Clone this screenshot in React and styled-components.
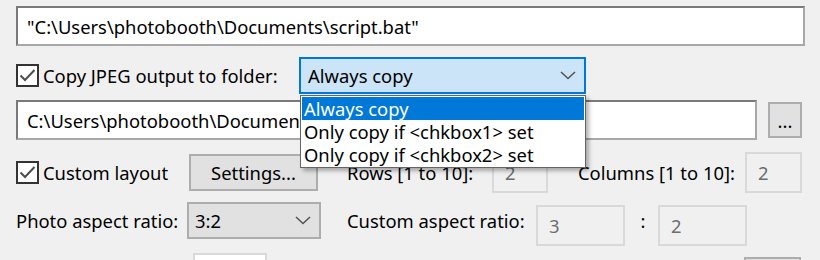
import React from "react";
import styled, { createGlobalStyle } from "styled-components";

const Global = createGlobalStyle`
  html, body {
    margin: 0;
    padding: 0;
    background: #f0f0f0;
    overflow: hidden;
  }
  body {
    font-family: "Noto Sans", "Open Sans", sans-serif;
    font-size: 18.4px;
    color: #000;
  }
`;

const Dialog = styled.div`
  width: 820px;
  height: 260px;
  padding: 6px 0 0 16px;
  box-sizing: border-box;
  display: flex;
  flex-direction: column;
  overflow: hidden;
`;

const Row = styled.div`
  display: flex;
  flex-shrink: 0;
  align-items: ${(p) => p.align || "center"};
  margin-top: ${(p) => p.mt || 0}px;
  height: ${(p) => p.h}px;
`;

const TextBox = styled.div`
  box-sizing: border-box;
  flex-shrink: 0;
  width: ${(p) => p.w}px;
  height: ${(p) => p.h || 40}px;
  background: #fff;
  border: 2px solid #7a7a7a;
  border-color: #7a7a7a #a8a8a8 #a8a8a8 #7a7a7a;
  padding-left: ${(p) => p.pl || 9}px;
  display: flex;
  align-items: center;
  white-space: nowrap;
  overflow: hidden;
`;

const DisabledBox = styled.div`
  box-sizing: border-box;
  width: ${(p) => p.w}px;
  height: ${(p) => p.h || 41}px;
  margin-top: ${(p) => p.mt || 0}px;
  margin-left: ${(p) => p.ml || 0}px;
  background: ${(p) => (p.white ? "#fff" : "#f0f0f0")};
  border: 2px solid #d9d9d9;
  color: #6d6d6d;
  padding-left: 11px;
  display: flex;
  align-items: center;
  flex-shrink: 0;
`;

const Check = styled.div`
  display: flex;
  align-items: center;
  width: ${(p) => p.w}px;
  flex-shrink: 0;
`;

const CheckBox = styled.span`
  box-sizing: border-box;
  width: 23px;
  height: 23px;
  border: 2px solid #333;
  background: #fff;
  display: inline-flex;
  align-items: center;
  justify-content: center;
  margin-right: 4px;
  flex-shrink: 0;
`;

const Label = styled.span`
  display: inline-block;
  width: ${(p) => (p.w ? `${p.w}px` : "auto")};
  margin-left: ${(p) => p.ml || 0}px;
  line-height: ${(p) => (p.lh ? `${p.lh}px` : "normal")};
  white-space: nowrap;
  flex-shrink: 0;
`;

const Button = styled.div`
  box-sizing: border-box;
  width: ${(p) => p.w}px;
  height: ${(p) => p.h}px;
  margin-left: ${(p) => p.ml || 0}px;
  margin-top: ${(p) => p.mt || 0}px;
  background: #e1e1e1;
  border: 2px solid #adadad;
  display: flex;
  align-items: center;
  justify-content: center;
  flex-shrink: 0;
`;

const ComboWrap = styled.div`
  position: relative;
  flex-shrink: 0;
`;

const Combo = styled.div`
  box-sizing: border-box;
  width: ${(p) => p.w}px;
  height: 37px;
  background: ${(p) => (p.focused ? "#cce4f7" : "#e1e1e1")};
  border: 2px solid ${(p) => (p.focused ? "#0078d7" : "#adadad")};
  padding: 0 8px 0 ${(p) => p.pl || 6}px;
  display: flex;
  align-items: center;
  justify-content: space-between;
`;

const List = styled.ul`
  position: absolute;
  top: 38px;
  left: 1px;
  box-sizing: border-box;
  width: 286px;
  margin: 0;
  padding: 1px;
  list-style: none;
  background: #fff;
  border: 1px solid #646464;
  box-shadow: 3px 3px 4px rgba(0, 0, 0, 0.3);
  z-index: 2;
`;

const Item = styled.li`
  height: 23px;
  line-height: 23px;
  padding-left: 2px;
  white-space: nowrap;
  background: ${(p) => (p.selected ? "#0078d7" : "transparent")};
  color: ${(p) => (p.selected ? "#fff" : "#000")};
`;

const Colon = styled.span`
  width: 8px;
  margin: 0 11px 0 14px;
  line-height: 37px;
  text-align: center;
`;

const Tick = () => (
  <svg width="19" height="19" viewBox="0 0 19 19">
    <polyline
      points="2.5,9.5 7,14 16.5,4"
      fill="none"
      stroke="#4d4d4d"
      strokeWidth="2"
    />
  </svg>
);

const Chevron = () => (
  <svg width="16" height="9" viewBox="0 0 16 9">
    <polyline
      points="1,1 8,7.5 15,1"
      fill="none"
      stroke="#555"
      strokeWidth="1.6"
    />
  </svg>
);

export default function App() {
  return (
    <>
      <Global />
      <Dialog>
        <TextBox w={789}>"C:\Users\photobooth\Documents\script.bat"</TextBox>

        <Row mt={11} h={37}>
          <Check w={283}>
            <CheckBox>
              <Tick />
            </CheckBox>
            <Label>Copy JPEG output to folder:</Label>
          </Check>
          <ComboWrap>
            <Combo w={287} focused pl={7}>
              <span>Always copy</span>
              <Chevron />
            </Combo>
            <List>
              <Item selected>Always copy</Item>
              <Item>Only copy if &lt;chkbox1&gt; set</Item>
              <Item>Only copy if &lt;chkbox2&gt; set</Item>
            </List>
          </ComboWrap>
        </Row>

        <Row mt={6} h={40}>
          <TextBox w={741}>C:\Users\photobooth\Documents\photos</TextBox>
          <Button w={34} h={36} ml={11}>
            ...
          </Button>
        </Row>

        <Row mt={12} h={41}>
          <Check w={173}>
            <CheckBox>
              <Tick />
            </CheckBox>
            <Label>Custom layout</Label>
          </Check>
          <Button w={129} h={37}>
            Settings...
          </Button>
          <Label w={145} ml={29}>
            Rows [1 to 10]:
          </Label>
          <DisabledBox w={56}>2</DisabledBox>
          <Label w={167} ml={30}>
            Columns [1 to 10]:
          </Label>
          <DisabledBox w={57}>2</DisabledBox>
        </Row>

        <Row mt={9} h={44} align="flex-start">
          <Label w={171} lh={37}>
            Photo aspect ratio:
          </Label>
          <ComboWrap>
            <Combo w={134}>
              <span>3:2</span>
              <Chevron />
            </Combo>
          </ComboWrap>
          <Label w={189} ml={26} lh={37}>
            Custom aspect ratio:
          </Label>
          <DisabledBox w={89} mt={3}>
            3
          </DisabledBox>
          <Colon>:</Colon>
          <DisabledBox w={89} mt={3}>
            2
          </DisabledBox>
        </Row>

        <Row mt={7} h={30} align="flex-start">
          <DisabledBox w={74} ml={177} white />
          <Button w={57} h={30} ml={477} mt={4} />
        </Row>
      </Dialog>
    </>
  );
}
